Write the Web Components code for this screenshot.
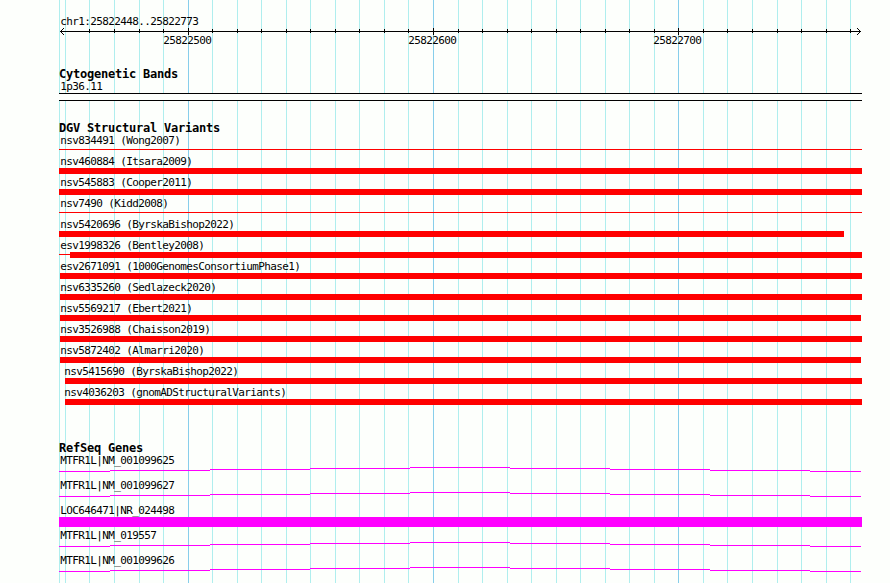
<!DOCTYPE html>
<html lang="en">
<head>
<meta charset="utf-8">
<title>chr1:25822448..25822773</title>
<style>
	body {
		margin: 0;
		height: 583px;
		overflow: hidden;
		background: #fdfffc;
		color: #000;
		font: 11px/13px "DejaVu Sans Mono", monospace;
	}
</style>
</head>
<body>
<genome-panel>
	<genome-ruler region="chr1:25822448..25822773"></genome-ruler>
	<track-section heading="Cytogenetic Bands" style="margin-top: 20px">
		<cyto-band name="1p36.11"></cyto-band>
	</track-section>
	<track-section heading="DGV Structural Variants" style="margin-top: 20px">
		<variant-row name="nsv834491 (Wong2007)" line="59"></variant-row>
		<variant-row name="nsv460884 (Itsara2009)" start="59"></variant-row>
		<variant-row name="nsv545883 (Cooper2011)" start="59"></variant-row>
		<variant-row name="nsv7490 (Kidd2008)" line="59"></variant-row>
		<variant-row name="nsv5420696 (ByrskaBishop2022)" start="59" end="844"></variant-row>
		<variant-row name="esv1998326 (Bentley2008)" line="59" start="70"></variant-row>
		<variant-row name="esv2671091 (1000GenomesConsortiumPhase1)" start="60"></variant-row>
		<variant-row name="nsv6335260 (Sedlazeck2020)" start="60"></variant-row>
		<variant-row name="nsv5569217 (Ebert2021)" start="60" end="861"></variant-row>
		<variant-row name="nsv3526988 (Chaisson2019)" start="60"></variant-row>
		<variant-row name="nsv5872402 (Almarri2020)" start="60" end="861"></variant-row>
		<variant-row name="nsv5415690 (ByrskaBishop2022)" start="65" indent="4"></variant-row>
		<variant-row name="nsv4036203 (gnomADStructuralVariants)" start="65" indent="4"></variant-row>
	</track-section>
	<track-section heading="RefSeq Genes" style="margin-top: 36px">
		<gene-row name="MTFR1L|NM_001099625"></gene-row>
		<gene-row name="MTFR1L|NM_001099627"></gene-row>
		<gene-row name="LOC646471|NR_024498" exon></gene-row>
		<gene-row name="MTFR1L|NM_019557"></gene-row>
		<gene-row name="MTFR1L|NM_001099626"></gene-row>
	</track-section>
</genome-panel>

<script>
const LEFT = 59;
const RIGHT = 862;
const MAJOR = { 188: "25822500", 433: "25822600", 678: "25822700" };
const TICKS = [
	89, 114, 139, 163, 188, 212, 237, 261, 286, 310, 335, 359, 384, 408, 433,
	458, 482, 507, 531, 556, 580, 605, 629, 654, 678, 703, 727, 752, 777, 801,
	826, 850,
];

// grid lines behind the slotted tracks
class GenomePanel extends HTMLElement {
	constructor() {
		super();

		this.shadow = this.attachShadow({ mode: "open" });
	}

	connectedCallback() {
		const lines = [LEFT, 65, ...TICKS]
			.map((x) => `<rect x="${x}" width="1" height="583" fill="${MAJOR[x] ? "#87ceeb" : "#afeeee"}"/>`)
			.join("");

		this.shadow.innerHTML = `
		<style>
			:host {
				display: grid;
				width: 890px;
				height: 583px;
			}
			svg, .tracks {
				grid-area: 1 / 1;
			}
			.tracks {
				z-index: 1;
				display: flex;
				flex-direction: column;
				box-sizing: border-box;
				padding: 15px 28px 0 59px;
			}
		</style>

		<svg width="890" height="583" shape-rendering="crispEdges">${lines}</svg>
		<div class="tracks"><slot></slot></div>`;
	}
}

class GenomeRuler extends HTMLElement {
	constructor() {
		super();

		this.shadow = this.attachShadow({ mode: "open" });
	}

	connectedCallback() {
		const ticks = TICKS.map((x) =>
			MAJOR[x]
				? `<rect x="${x - LEFT}" y="0" width="1" height="7"/>`
				: `<rect x="${x - LEFT}" y="1" width="1" height="4"/>`
		).join("");
		const labels = Object.keys(MAJOR)
			.map((x) => `<text x="${x - LEFT - 24.7}" y="16">${MAJOR[x]}</text>`)
			.join("");

		this.shadow.innerHTML = `
		<style>
			:host {
				display: block;
				height: 32px;
				letter-spacing: -0.622px;
			}
			.region {
				padding-left: 1.3px;
			}
			svg {
				display: block;
			}
		</style>

		<div class="region">${this.getAttribute("region")}</div>
		<svg width="803" height="19">
			<g shape-rendering="crispEdges">
				<rect x="1" y="3" width="801" height="1"/>
				${ticks}
				<path d="M2 2h1v1h-1zM3 1h1v1h-1zM4 0h1v1h-1zM2 4h1v1h-1zM3 5h1v1h-1zM4 6h1v1h-1z"/>
				<path d="M800 2h1v1h-1zM799 1h1v1h-1zM798 0h1v1h-1zM800 4h1v1h-1zM799 5h1v1h-1zM798 6h1v1h-1z"/>
			</g>
			${labels}
		</svg>`;
	}
}

class TrackSection extends HTMLElement {
	constructor() {
		super();

		this.shadow = this.attachShadow({ mode: "open" });
	}

	connectedCallback() {
		this.shadow.innerHTML = `
		<style>
			:host {
				display: block;
			}
			.heading {
				height: 13px;
				font-size: 12px;
				font-weight: bold;
				line-height: 14px;
				letter-spacing: -0.224px;
			}
			.rows {
				display: flex;
				flex-direction: column;
				gap: 2px;
			}
		</style>

		<div class="heading">${this.getAttribute("heading")}</div>
		<div class="rows"><slot></slot></div>`;
	}
}

// shared label styling of the rows
const ROW_STYLE = `
	:host {
		display: block;
	}
	.name {
		height: 13px;
		padding-left: 1.3px;
		letter-spacing: -0.622px;
		white-space: nowrap;
	}
	svg {
		display: block;
	}`;

class CytoBand extends HTMLElement {
	constructor() {
		super();

		this.shadow = this.attachShadow({ mode: "open" });
	}

	connectedCallback() {
		this.shadow.innerHTML = `
		<style>
			${ROW_STYLE}
			.band {
				height: 6px;
				border: solid #000;
				border-width: 1px 0;
				background: #fdfffc;
			}
		</style>

		<div class="name">${this.getAttribute("name")}</div>
		<div class="band"></div>`;
	}
}

class VariantRow extends HTMLElement {
	constructor() {
		super();

		this.shadow = this.attachShadow({ mode: "open" });
	}

	connectedCallback() {
		const start = this.getAttribute("start");
		const line = this.getAttribute("line");
		const end = this.getAttribute("end") || RIGHT;
		const indent = Number(this.getAttribute("indent") || 0);
		let shapes = "";

		if (line) {
			shapes += `<rect x="${line - LEFT}" y="2" width="${end - line}" height="1"/>`;
		}
		if (start) {
			shapes += `<rect x="${start - LEFT}" width="${end - start}" height="6"/>`;
		}

		this.shadow.innerHTML = `
		<style>
			${ROW_STYLE}
			.name {
				padding-left: ${1.3 + indent}px;
			}
		</style>

		<div class="name">${this.getAttribute("name")}</div>
		<svg width="803" height="6" fill="#f00" shape-rendering="crispEdges">${shapes}</svg>`;
	}
}

class GeneRow extends HTMLElement {
	constructor() {
		super();

		this.shadow = this.attachShadow({ mode: "open" });
	}

	connectedCallback() {
		// introns are drawn as a shallow hat, one pixel per step
		const edges = [59, 110, 210, 310, 410, 510, 610, 710, 810, 861];
		const intron = edges
			.slice(0, -1)
			.map((x, i) => `<rect x="${x - LEFT}" y="${Math.abs(4 - i)}" width="${edges[i + 1] - x}" height="1"/>`)
			.join("");
		const exon = `<rect width="803" height="10"/>`;

		this.shadow.innerHTML = `
		<style>${ROW_STYLE}</style>

		<div class="name">${this.getAttribute("name")}</div>
		<svg width="803" height="10" fill="#f0f" shape-rendering="crispEdges">${this.hasAttribute("exon") ? exon : intron}</svg>`;
	}
}

customElements.define("genome-panel", GenomePanel);
customElements.define("genome-ruler", GenomeRuler);
customElements.define("track-section", TrackSection);
customElements.define("cyto-band", CytoBand);
customElements.define("variant-row", VariantRow);
customElements.define("gene-row", GeneRow);
</script>
</body>
</html>
